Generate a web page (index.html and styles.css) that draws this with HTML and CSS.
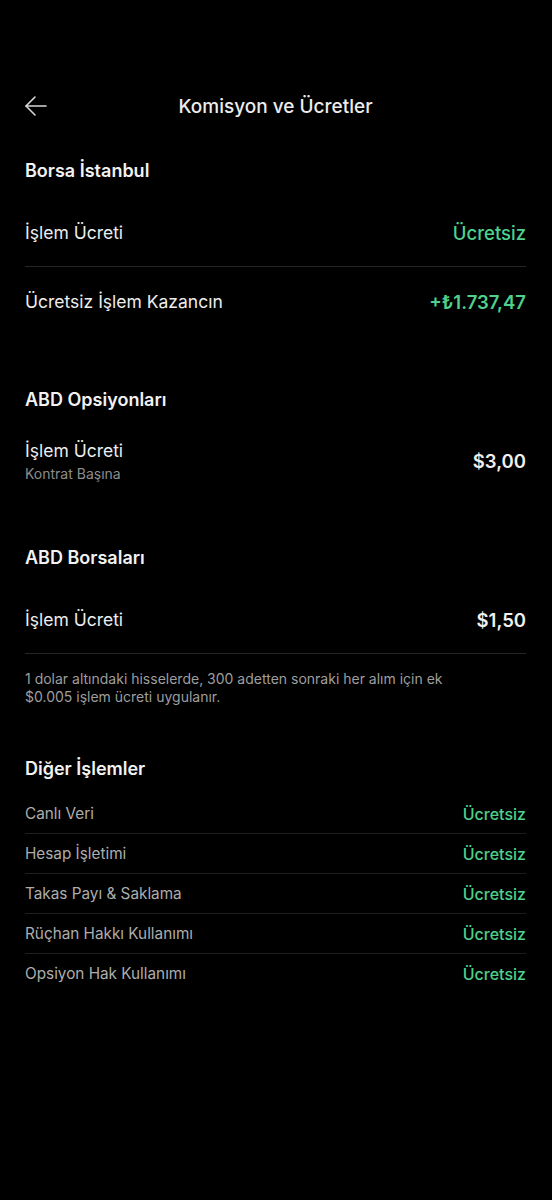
FILE: index.html
```html
<!DOCTYPE html>
<html lang="tr">
<head>
    <meta charset="UTF-8">
    <meta name="viewport" content="width=device-width, initial-scale=1.0">
    <title>Komisyon ve Ücretler</title>
    <link rel="stylesheet" href="styles.css">
</head>
<body>

    <!-- Top Bar -->
    <div class="topbar">
        <button class="back-btn" aria-label="Geri">
            <svg width="24" height="24" viewBox="0 0 24 24" fill="none" stroke="#d8d8d8" stroke-width="1.6" stroke-linecap="round" stroke-linejoin="round">
                <path d="M22 12H2"/>
                <path d="M11 3L2 12l9 9"/>
            </svg>
        </button>
        <div class="topbar-title">Komisyon ve Ücretler</div>
    </div>

    <!-- Borsa Istanbul -->
    <section class="section">
        <h2 class="section-title">Borsa İstanbul</h2>
        <div class="fee-row divided">
            <span class="fee-label">İşlem Ücreti</span>
            <span class="fee-value green">Ücretsiz</span>
        </div>
        <div class="fee-row">
            <span class="fee-label">Ücretsiz İşlem Kazancın</span>
            <span class="fee-value green bold">+₺1.737,47</span>
        </div>
    </section>

    <!-- ABD Opsiyonlari -->
    <section class="section">
        <h2 class="section-title">ABD Opsiyonları</h2>
        <div class="fee-row tall">
            <div>
                <div class="fee-label">İşlem Ücreti</div>
                <div class="fee-sub">Kontrat Başına</div>
            </div>
            <span class="fee-value bold">$3,00</span>
        </div>
    </section>

    <!-- ABD Borsalari -->
    <section class="section">
        <h2 class="section-title">ABD Borsaları</h2>
        <div class="fee-row divided">
            <span class="fee-label">İşlem Ücreti</span>
            <span class="fee-value bold">$1,50</span>
        </div>
        <p class="note">1 dolar altındaki hisselerde, 300 adetten sonraki her alım için ek $0.005 işlem ücreti uygulanır.</p>
    </section>

    <!-- Diger Islemler -->
    <section class="section">
        <h2 class="section-title">Diğer İşlemler</h2>
        <div class="small-list" id="other-list">
            <!-- rows injected below -->
        </div>
    </section>

    <script>
        const otherFees = ['Canlı Veri', 'Hesap İşletimi', 'Takas Payı & Saklama', 'Rüçhan Hakkı Kullanımı', 'Opsiyon Hak Kullanımı'];
        const list = document.getElementById('other-list');
        otherFees.forEach(name => {
            const row = document.createElement('div');
            row.className = 'small-row';
            row.innerHTML = `<span>${name}</span><span class="green">Ücretsiz</span>`;
            list.appendChild(row);
        });
    </script>

</body>
</html>
```

FILE: styles.css
```css
/* General */
body {
    font-family: 'Inter', 'Noto Sans', sans-serif;
    margin: 0;
    padding: 0 26px 0 25px;
    background: #000000;
    color: #ededed;
}

/* Top bar */
.topbar {
    height: 60px;
    margin-top: 76px;
    display: flex;
    align-items: center;
    justify-content: center;
    position: relative;
}

.back-btn {
    position: absolute;
    left: -1px;
    top: 18px;
    background: none;
    border: none;
    padding: 0;
    width: 24px;
    height: 24px;
    cursor: pointer;
}

.topbar-title {
    font-size: 19px;
    font-weight: 500;
    color: #ececec;
}

/* Sections */
.section {
    margin-top: 23px;
}

.section + .section {
    margin-top: 51px;
}

.section-title {
    margin: 0;
    font-size: 18px;
    font-weight: 600;
    line-height: 24px;
    color: #f2f2f2;
}

/* Fee rows */
.fee-row {
    height: 70px;
    display: flex;
    align-items: center;
    justify-content: space-between;
}

.section-title + .fee-row {
    margin-top: 17px;
}

.fee-row.divided {
    height: 66px;
    border-bottom: 1px solid #262626;
}

.section-title + .fee-row.tall {
    height: auto;
    margin-top: 4px;
    padding: 23px 0 12px;
}

.fee-label {
    font-size: 17.5px;
    line-height: 24px;
    color: #ededed;
}

.fee-sub {
    font-size: 14px;
    line-height: 18px;
    margin-top: 2px;
    color: #8c8c8c;
}

.fee-value {
    font-size: 18.5px;
    font-weight: 500;
    color: #f0f0f0;
}

.green {
    color: #4fd08c;
}

.bold {
    font-weight: 600;
}

.note {
    margin: 16px 0 0;
    max-width: 460px;
    font-size: 14px;
    line-height: 18px;
    color: #9e9e9e;
}

/* Small list */
.small-list {
    margin-top: 13px;
}

.small-row {
    height: 39px;
    display: flex;
    align-items: center;
    justify-content: space-between;
    border-bottom: 1px solid #1e1e1e;
    font-size: 15.3px;
    color: #adadad;
}

.small-row:last-child {
    border-bottom: none;
}

.small-row .green {
    font-size: 16px;
    font-weight: 500;
}
```
